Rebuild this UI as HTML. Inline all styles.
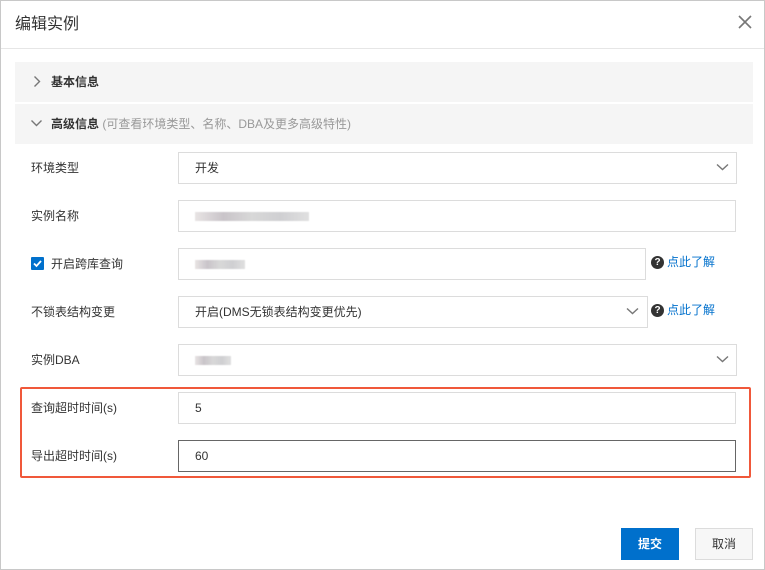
<!DOCTYPE html>
<html><head><meta charset="utf-8"><style>
*{box-sizing:border-box;margin:0;padding:0}
body{width:765px;height:570px;background:#fff;font-family:"Liberation Sans","Noto Sans CJK SC",sans-serif;font-size:12px;color:#333;position:relative;overflow:hidden}
.frame{position:absolute;left:0;top:0;width:765px;height:570px;border:1px solid #c8c8c8}
.abs{position:absolute}
.title{left:15px;top:10px;font-size:16px;color:#333}
.sep{left:1px;top:48px;width:763px;height:1px;background:#e6e6e6}
.bar{left:15px;width:738px;height:40px;background:#f5f5f5;font-weight:bold;font-size:12px;line-height:40px;padding-left:36px;color:#333}
.bar .g{font-weight:normal;color:#999}
.lbl{left:31px;font-size:12px;color:#333}
.inp{left:178px;height:32px;border:1px solid #dcdcdc;background:#fff;padding-left:16px;line-height:30px;font-size:12px;color:#333}
.blur{position:absolute;top:11px;height:9px;background:linear-gradient(90deg,#e8e4e4,#c9c4c9,#d8d8d8,#cfcfd2,#e0e0e0);filter:blur(0.6px)}
.help{font-size:12px;color:#0070cc;display:flex;align-items:center;height:16px;line-height:16px}
.q{display:inline-block;width:13px;height:13px;border-radius:50%;background:#333;color:#fff;font-size:10px;font-weight:bold;text-align:center;line-height:13px;margin-right:3px}
.btn{top:528px;height:32px;line-height:30px;text-align:center;font-size:12px}
</style></head><body>
<div class="frame"></div>
<div class="abs title">编辑实例</div>
<svg class="abs" style="left:737px;top:14px" width="16" height="16" viewBox="0 0 16 16"><path d="M2 2L14 14M14 2L2 14" stroke="#777" stroke-width="1.6"/></svg>
<div class="abs sep"></div>

<div class="abs bar" style="top:62px">基本信息</div>
<svg class="abs" style="left:33px;top:75px" width="8" height="13" viewBox="0 0 8 13"><path d="M1.5 1.5L6.5 6.5L1.5 11.5" stroke="#777" stroke-width="1.4" fill="none"/></svg>
<div class="abs bar" style="top:104px">高级信息 <span class="g">(可查看环境类型、名称、DBA及更多高级特性)</span></div>
<svg class="abs" style="left:30px;top:119px" width="13" height="8" viewBox="0 0 13 8"><path d="M1.5 1.5L6.5 6.5L11.5 1.5" stroke="#777" stroke-width="1.4" fill="none"/></svg>

<div class="abs lbl" style="top:159px">环境类型</div>
<div class="abs inp" style="top:152px;width:559px">开发</div>
<svg class="abs" style="left:716px;top:163px" width="13" height="8" viewBox="0 0 13 8"><path d="M1 1.5L6.5 6.5L12 1.5" stroke="#777" stroke-width="1.4" fill="none"/></svg>

<div class="abs lbl" style="top:207px">实例名称</div>
<div class="abs inp" style="top:200px;width:558px"><div class="blur" style="left:16px;width:114px"></div></div>

<div class="abs" style="left:31px;top:257px;width:13px;height:13px;background:#0070cc;border-radius:1px"></div>
<svg class="abs" style="left:31px;top:257px" width="13" height="13" viewBox="0 0 13 13"><path d="M3 6.5L5.5 9L10 4" stroke="#fff" stroke-width="1.8" fill="none"/></svg>
<div class="abs lbl" style="top:255px;left:51px">开启跨库查询</div>
<div class="abs inp" style="top:248px;width:468px"><div class="blur" style="left:16px;width:50px"></div></div>
<div class="abs help" style="left:651px;top:254px"><span class="q">?</span>点此了解</div>

<div class="abs lbl" style="top:303px">不锁表结构变更</div>
<div class="abs inp" style="top:296px;width:470px">开启(DMS无锁表结构变更优先)</div>
<svg class="abs" style="left:626px;top:307px" width="13" height="8" viewBox="0 0 13 8"><path d="M1 1.5L6.5 6.5L12 1.5" stroke="#777" stroke-width="1.4" fill="none"/></svg>
<div class="abs help" style="left:651px;top:302px"><span class="q">?</span>点此了解</div>

<div class="abs lbl" style="top:351px">实例DBA</div>
<div class="abs inp" style="top:344px;width:559px"><div class="blur" style="left:16px;width:36px"></div></div>
<svg class="abs" style="left:716px;top:355px" width="13" height="8" viewBox="0 0 13 8"><path d="M1 1.5L6.5 6.5L12 1.5" stroke="#777" stroke-width="1.4" fill="none"/></svg>

<div class="abs" style="left:20px;top:387px;width:731px;height:91px;border:2px solid #f0583a;border-radius:2px"></div>
<div class="abs lbl" style="top:399px">查询超时时间(s)</div>
<div class="abs inp" style="top:392px;width:558px">5</div>
<div class="abs lbl" style="top:447px">导出超时时间(s)</div>
<div class="abs inp" style="top:440px;width:558px;border-color:#666">60</div>

<div class="abs btn" style="left:621px;width:58px;background:#0070cc;color:#fff;border:1px solid #0070cc;font-weight:bold">提交</div>
<div class="abs btn" style="left:695px;width:58px;background:#f7f7f7;color:#333;border:1px solid #dcdcdc">取消</div>
</body></html>
